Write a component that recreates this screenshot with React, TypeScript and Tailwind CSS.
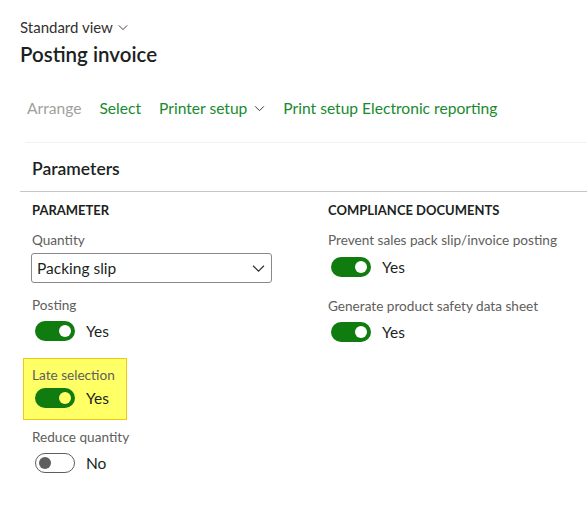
import React from 'react';

const Chevron = ({ className }: { className?: string }) => (
    <svg viewBox="0 0 12 8" className={className} fill="none" stroke="currentColor" strokeWidth="1.1">
        <path d="M1 1.5 L6 6.5 L11 1.5" />
    </svg>
);

const Toggle = ({ on, knob = '#ffffff' }: { on: boolean; knob?: string }) =>
    on ? (
        <div className="w-10 h-5 rounded-full bg-[#107c10] flex items-center justify-end pr-[4px]">
            <div className="w-3 h-3 rounded-full" style={{ backgroundColor: knob }} />
        </div>
    ) : (
        <div className="w-10 h-5 rounded-full border border-[#605e5c] bg-white flex items-center pl-[3px]">
            <div className="w-3 h-3 rounded-full bg-[#605e5c]" />
        </div>
    );

const Label = ({ children }: { children: React.ReactNode }) => (
    <div className="text-[13.6px] leading-4 text-[#605e5c] whitespace-nowrap">{children}</div>
);

const ToggleRow = ({ on, knob, className }: { on: boolean; knob?: string; className?: string }) => (
    <div className={`flex items-center gap-[11px] ml-[3px] ${className ?? ''}`}>
        <Toggle on={on} knob={knob} />
        <span className="text-[15.5px] leading-5 text-[#201f1e]">{on ? 'Yes' : 'No'}</span>
    </div>
);

export default function App() {
    return (
        <div className="w-[587px] h-[507px] bg-white overflow-hidden text-[#201f1e] font-['Segoe_UI','Lato','Noto_Sans',sans-serif]">
            <div className="pl-5 pt-[17px]">
                <div className="flex items-center gap-[5px] text-[15px] leading-5 text-[#323130]">
                    Standard view <Chevron className="w-[10px] h-[7px] mt-[1px]" />
                </div>
                <h1 className="mt-[3px] text-[20.5px] leading-7 font-semibold">Posting invoice</h1>
            </div>

            <div className="mt-[30px] pl-[27px] flex items-center gap-[18px] text-[15.6px] leading-5 text-[#188a2f]">
                <span className="text-[#a19f9d]">Arrange</span>
                <span>Select</span>
                <span className="flex items-center gap-[7px]">
                    Printer setup <Chevron className="w-[11px] h-[7px] text-[#323130]" />
                </span>
                <span>Print setup Electronic reporting</span>
            </div>

            <div className="mt-[24px] ml-[25px] border-t border-[#f3f2f1]" />

            <div className="pt-[14px] pl-[32px] h-[48px] text-[17.5px] leading-6 font-semibold">Parameters</div>
            <div className="ml-5 border-t border-[#c8c6c4]" />

            <div className="grid grid-cols-[296px_1fr] pt-[10px]">
                <div className="pl-[23px]">
                    <div className="pl-[9px] text-[13px] leading-4 font-bold">PARAMETER</div>
                    <div className="pl-[9px] mt-[14px]">
                        <Label>Quantity</Label>
                        <div className="mt-[5px] -ml-[1px] w-[241px] h-[30px] rounded-[3px] border border-[#8a8886] flex items-center justify-between pl-[5px] pr-[6px]">
                            <span className="text-[15.5px] leading-5">Packing slip</span>
                            <Chevron className="w-[13px] h-[9px] text-[#323130]" />
                        </div>
                    </div>
                    <div className="pl-[9px] mt-[14px]">
                        <Label>Posting</Label>
                        <ToggleRow on className="mt-[8px]" />
                    </div>
                    <div className="mt-[17px] w-[104px] h-[62px] bg-[#ffff66] border border-[#f2c811] pl-[8px] pt-[8px]">
                        <Label>Late selection</Label>
                        <ToggleRow on knob="#ffff66" className="mt-[5px]" />
                    </div>
                    <div className="pl-[9px] mt-[9px]">
                        <Label>Reduce quantity</Label>
                        <ToggleRow on={false} className="mt-[8px]" />
                    </div>
                </div>
                <div className="pl-[32px]">
                    <div className="text-[13px] leading-4 font-bold">COMPLIANCE DOCUMENTS</div>
                    <div className="mt-[14px]">
                        <Label>Prevent sales pack slip/invoice posting</Label>
                        <ToggleRow on className="mt-[9px]" />
                    </div>
                    <div className="mt-[21px]">
                        <Label>Generate product safety data sheet</Label>
                        <ToggleRow on className="mt-[8px]" />
                    </div>
                </div>
            </div>
        </div>
    );
}
